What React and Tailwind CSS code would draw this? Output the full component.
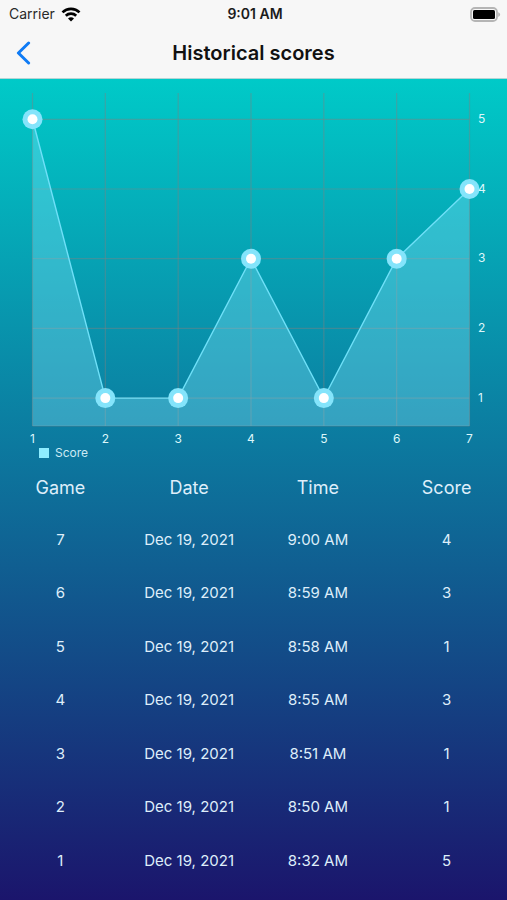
const games = [
  { game: 7, date: "Dec 19, 2021", time: "9:00 AM", score: 4 },
  { game: 6, date: "Dec 19, 2021", time: "8:59 AM", score: 3 },
  { game: 5, date: "Dec 19, 2021", time: "8:58 AM", score: 1 },
  { game: 4, date: "Dec 19, 2021", time: "8:55 AM", score: 3 },
  { game: 3, date: "Dec 19, 2021", time: "8:51 AM", score: 1 },
  { game: 2, date: "Dec 19, 2021", time: "8:50 AM", score: 1 },
  { game: 1, date: "Dec 19, 2021", time: "8:32 AM", score: 5 },
];

const LEFT = 32.5;
const RIGHT = 469.5;
const TOP = 14;
const BOTTOM = 347;

const xOf = (game) => LEFT + ((game - 1) * (RIGHT - LEFT)) / 6;
const yOf = (score) => 40.3 + (5 - score) * 69.7;

const StatusBar = () => (
  <div className="grid h-7 grid-cols-3 items-center pl-[9px] pr-1.5 text-sm leading-7">
    <div className="flex items-center gap-1.5 text-[#2a2a2a]">
      <span>Carrier</span>
      <svg width="20" height="15" viewBox="0 0 20 15" fill="none" stroke="#000" strokeWidth="2.7">
        <path d="M1.5 5.4C6.2 .8 13.8 .8 18.5 5.4" />
        <path d="M4.8 8.8c2.9-2.8 7.5-2.8 10.4 0" />
        <path d="M10 14.4 7 11.4c1.7-1.6 4.3-1.6 6 0z" fill="#000" stroke="none" />
      </svg>
    </div>
    <div className="text-center font-semibold text-[#1c1c1c]">9:01 AM</div>
    <div className="flex justify-end">
      <svg width="31" height="15" viewBox="0 0 31 15">
        <rect x="1" y="1" width="26" height="13" rx="4" fill="#f7f7f7" stroke="#b5b5b5" strokeWidth="1.8" />
        <rect x="3" y="3" width="22" height="9" rx="1.5" fill="#000" />
        <path d="M28.2 5.2c2.6 1 2.6 3.6 0 4.6z" fill="#b5b5b5" />
      </svg>
    </div>
  </div>
);

const NavBar = () => (
  <div className="grid h-[50px] grid-cols-[48px_1fr_48px] items-center">
    <button type="button" aria-label="Back" className="flex h-full items-center pl-4">
      <svg width="15" height="24" viewBox="0 0 15 24" fill="none" stroke="#0f7bf5" strokeWidth="3" strokeLinecap="round" strokeLinejoin="round">
        <path d="M12.6 2 2.4 12l10.2 10" />
      </svg>
    </button>
    <h1 className="text-center text-xl font-semibold text-[#111]">
      Historical scores
    </h1>
  </div>
);

const ScoreChart = () => {
  const points = [...games].reverse();
  const line = points.map((p) => `${xOf(p.game)},${yOf(p.score)}`).join(" ");
  return (
    <div>
      <svg viewBox="0 0 507 367" className="block w-full" role="img" aria-label="Score">
        <g stroke="#808080" strokeOpacity="0.45" strokeWidth="1.2">
          {points.map((p) => (
            <line key={p.game} x1={xOf(p.game)} x2={xOf(p.game)} y1={TOP} y2={BOTTOM} />
          ))}
          {[1, 2, 3, 4, 5].map((s) => (
            <line key={s} x1={LEFT} x2={RIGHT} y1={yOf(s)} y2={yOf(s)} />
          ))}
          <line x1={LEFT} x2={RIGHT} y1={BOTTOM} y2={BOTTOM} />
        </g>
        <polygon
          points={`${LEFT},${BOTTOM} ${line} ${RIGHT},${BOTTOM}`}
          fill="#8cebff"
          fillOpacity="0.33"
        />
        <polyline points={line} fill="none" stroke="#6fe0f8" strokeWidth="1.4" />
        {points.map((p) => (
          <g key={p.game}>
            <circle cx={xOf(p.game)} cy={yOf(p.score)} r="10" fill="#84e4fb" />
            <circle cx={xOf(p.game)} cy={yOf(p.score)} r="5" fill="#fff" />
          </g>
        ))}
        <g fill="#dcf7fb" fontSize="12">
          {[1, 2, 3, 4, 5].map((s) => (
            <text key={s} x="478" y={yOf(s) + 3.5}>
              {s}
            </text>
          ))}
          {points.map((p) => (
            <text key={p.game} x={xOf(p.game)} y="364" textAnchor="middle">
              {p.game}
            </text>
          ))}
        </g>
      </svg>
      <div className="flex h-4 items-center gap-1.5 pb-0.5 pl-[39px] text-xs text-[#cdeaf4]">
        <span className="size-2.5 bg-[#8eedff]" />
        Score
      </div>
    </div>
  );
};

const ScoreTable = () => (
  <table className="flex flex-1 flex-col pb-3 text-[#deeefa]">
    <thead className="block">
      <tr className="grid h-[51px] grid-cols-4 items-center gap-6 px-2 text-lg">
        <th className="font-normal">Game</th>
        <th className="font-normal">Date</th>
        <th className="font-normal">Time</th>
        <th className="font-normal">Score</th>
      </tr>
    </thead>
    <tbody className="grid flex-1 auto-rows-fr text-center text-[15px]">
      {games.map((g) => (
        <tr key={g.game} className="grid grid-cols-4 items-center gap-6 px-2">
          <td>{g.game}</td>
          <td className="whitespace-nowrap">{g.date}</td>
          <td className="whitespace-nowrap">{g.time}</td>
          <td>{g.score}</td>
        </tr>
      ))}
    </tbody>
  </table>
);

export default function App() {
  return (
    <div className="flex min-h-screen flex-col font-['Inter',sans-serif]">
      <header className="border-b border-[#b5d5d5] bg-[#f7f7f7]">
        <StatusBar />
        <NavBar />
      </header>
      <main className="flex flex-1 flex-col bg-linear-to-b/srgb from-[#00cac8] to-[#1b156c]">
        <ScoreChart />
        <ScoreTable />
      </main>
    </div>
  );
}
